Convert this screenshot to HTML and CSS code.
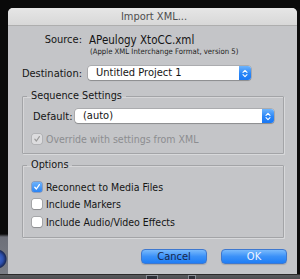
FILE: index.html
```html
<!DOCTYPE html>
<html>
<head>
<meta charset="utf-8">
<link rel="stylesheet" href="styles.css">
</head>
<body>
<div class="screen">
  <div class="left-strip"></div>
  <div class="dialog">
    <div class="titlebar">Import XML...</div>
    <div class="content">
      <div class="form-row source-row">
        <span class="label">Source:</span>
        <span class="value">APeulogy XtoCC.xml</span>
      </div>
      <div class="form-row sub-row">
        <span class="label"></span>
        <span class="sub">(Apple XML Interchange Format, version 5)</span>
      </div>
      <div class="form-row dest-row">
        <span class="label">Destination:</span>
        <div class="popup dest-popup">
          <span class="popup-text">Untitled Project 1</span>
          <span class="popup-cap">
            <svg width="6" height="9" viewBox="0 0 6 9"><path d="M1 3.3 L3 1.3 L5 3.3 M1 5.7 L3 7.7 L5 5.7" fill="none" stroke="#fff" stroke-width="1.1" stroke-linecap="round" stroke-linejoin="round"/></svg>
          </span>
        </div>
      </div>

      <fieldset class="group seq-group">
        <legend>Sequence Settings</legend>
        <div class="default-row">
          <span class="default-label">Default:</span>
          <div class="popup default-popup">
            <span class="popup-text">(auto)</span>
            <span class="popup-cap">
              <svg width="6" height="9" viewBox="0 0 6 9"><path d="M1 3.3 L3 1.3 L5 3.3 M1 5.7 L3 7.7 L5 5.7" fill="none" stroke="#fff" stroke-width="1.1" stroke-linecap="round" stroke-linejoin="round"/></svg>
            </span>
          </div>
        </div>
        <div class="check disabled override">
          <span class="box box-disabled">
            <svg width="8" height="8" viewBox="0 0 8 8"><path d="M1.8 4.2 L3.4 6 L6.4 1.6" fill="none" stroke="#9a9a9a" stroke-width="1.2" stroke-linecap="round" stroke-linejoin="round"/></svg>
          </span>
          <span>Override with settings from XML</span>
        </div>
      </fieldset>

      <fieldset class="group opt-group">
        <legend>Options</legend>
        <div class="check">
          <span class="box box-checked">
            <svg width="8" height="8" viewBox="0 0 8 8"><path d="M1.8 4.2 L3.4 6 L6.4 1.6" fill="none" stroke="#fff" stroke-width="1.3" stroke-linecap="round" stroke-linejoin="round"/></svg>
          </span>
          <span>Reconnect to Media Files</span>
        </div>
        <div class="check">
          <span class="box"></span>
          <span>Include Markers</span>
        </div>
        <div class="check">
          <span class="box"></span>
          <span>Include Audio/Video Effects</span>
        </div>
      </fieldset>

      <div class="buttons">
        <button class="btn btn-cancel">Cancel</button>
        <button class="btn btn-ok">OK</button>
      </div>
    </div>
  </div>
  <div class="right-strip"></div>
  <div class="bottom-strip">
    <span class="tool-icon"></span>
    <span class="tool-icon tool-icon-2"></span>
  </div>
</div>
</body>
</html>
```

FILE: styles.css
```css
html, body {
  margin: 0;
  padding: 0;
  background: #0a0a0a;
}

.screen {
  width: 300px;
  height: 279px;
  display: grid;
  grid-template-columns: 8px 289px 3px;
  grid-template-rows: 8px 266px 5px;
  background: #0a0a0a;
  font-family: "DejaVu Sans Condensed", "DejaVu Sans", sans-serif;
  font-stretch: condensed;
  color: #151515;
  overflow: hidden;
}

.left-strip {
  grid-column: 1;
  grid-row: 2;
  background:
    radial-gradient(circle at -3px 251px, #4a74d8 0, #2c4fae 6px, #1a2a5a 9px, transparent 10px),
    linear-gradient(to bottom, #0a0a0a 0, #0a0a0a 226px, #6d7079 229px, #7b7e86 266px);
}

.right-strip {
  grid-column: 3;
  grid-row: 2;
  background: #0c0c0c;
}

.dialog {
  grid-column: 2;
  grid-row: 2;
  background: #c4c5c8;
  border-radius: 5px 5px 0 0;
  display: flex;
  flex-direction: column;
  overflow: hidden;
}

.titlebar {
  height: 17px;
  line-height: 17px;
  border-bottom: 1px solid #aeaeae;
  background: linear-gradient(#e6e6e6, #d8d8d8);
  text-align: center;
  font-size: 11px;
  color: #4e4e4e;
  padding-left: 3px;
}

.content {
  padding-top: 8px;
  display: flex;
  flex-direction: column;
}

.form-row {
  display: grid;
  grid-template-columns: 74px 1fr;
  column-gap: 6px;
  align-items: center;
}

.label {
  text-align: right;
  font-size: 11px;
}

.source-row {
  height: 12px;
  line-height: 12px;
}

.value {
  font-size: 11.5px;
  padding-left: 1px;
  color: #141414;
}

.sub-row {
  margin-top: 1px;
  height: 10px;
  line-height: 10px;
}

.sub {
  font-size: 7.7px;
  padding-left: 2px;
  color: #1e1e1e;
}

.dest-row {
  margin-top: 9px;
  height: 14px;
}

.popup {
  height: 14px;
  background: #fff;
  border-radius: 3px;
  display: flex;
  align-items: center;
  box-shadow: 0 0 0 0.5px rgba(0, 0, 0, 0.25), 0 1px 1px rgba(0, 0, 0, 0.18);
  overflow: hidden;
}

.dest-popup {
  width: 163px;
}

.popup-text {
  flex: 1;
  padding-left: 8px;
  font-size: 11px;
  line-height: 14px;
  color: #141414;
}

.popup-cap {
  width: 12px;
  height: 14px;
  background: linear-gradient(#6eb4fc, #2a86f7 55%, #1a78f4);
  display: flex;
  align-items: center;
  justify-content: center;
}

.group {
  margin: 0 13px 0 14px;
  border: 1px solid #a3a4a7;
  box-shadow: 1px 1px 0 rgba(255, 255, 255, 0.35), inset 1px 1px 0 rgba(255, 255, 255, 0.3);
  border-radius: 1px;
  padding: 0 9px 0 9px;
  min-width: 0;
}

.group legend {
  font-size: 10.8px;
  line-height: 12px;
  padding: 0 4px;
  margin-left: -5px;
  color: #151515;
}

.seq-group {
  margin-top: 10px;
  padding-top: 7px;
  padding-bottom: 8px;
}

.default-row {
  display: flex;
  align-items: center;
  height: 14px;
  padding-left: 1px;
}

.default-label {
  font-size: 11px;
  width: 42px;
}

.default-popup {
  flex: 1;
}

.default-popup .popup-text {
  padding-left: 8px;
}

.check {
  display: flex;
  align-items: center;
  height: 17.5px;
  font-size: 10.5px;
  color: #151515;
}

.check .box {
  width: 10px;
  height: 10px;
  box-sizing: border-box;
  border-radius: 2px;
  background: #fff;
  box-shadow: 0 0 0 0.5px rgba(0, 0, 0, 0.3), 0 1px 1px rgba(0, 0, 0, 0.15);
  margin-right: 4px;
  display: flex;
  align-items: center;
  justify-content: center;
  flex: none;
}

.check .box-checked {
  background: linear-gradient(#6cb2fb, #2a84f5);
  box-shadow: 0 0 0 0.5px rgba(20, 70, 160, 0.6);
}

.override {
  margin-top: 10px;
  height: 12px;
}

.disabled {
  color: #8c8d90;
}

.check .box-disabled {
  background: #dcdcde;
  box-shadow: 0 0 0 0.5px rgba(0, 0, 0, 0.18);
}

.opt-group {
  margin-top: 5px;
  padding-top: 7px;
  padding-bottom: 6px;
}

.buttons {
  margin-top: 11px;
  display: flex;
  justify-content: flex-end;
  gap: 14px;
  padding-right: 10px;
}

.btn {
  width: 66px;
  height: 15px;
  border: 1px solid #3e78cf;
  border-radius: 4px;
  background: linear-gradient(#79bafc, #3b91f8 50%, #1f7ef6);
  font-family: "DejaVu Sans Condensed", "DejaVu Sans", sans-serif;
  font-stretch: condensed;
  font-size: 11px;
  line-height: 13px;
  padding: 0;
  box-shadow: 0 1px 1px rgba(0, 0, 0, 0.15);
}

.btn-cancel {
  color: #17264a;
}

.btn-ok {
  color: #eef5ff;
}

.bottom-strip {
  grid-column: 1 / 4;
  grid-row: 3;
  background: linear-gradient(#2a2a2a 0, #2a2a2a 1px, #5a5b5e 1px, #4c4d50 5px);
  display: flex;
  gap: 30px;
  padding-left: 146px;
}

.tool-icon {
  width: 10px;
  height: 4px;
  margin-top: 1px;
  background: #2d2f36;
  border: 1px solid #8a8d95;
  border-bottom: none;
}

.tool-icon-2 {
  width: 6px;
}
```
